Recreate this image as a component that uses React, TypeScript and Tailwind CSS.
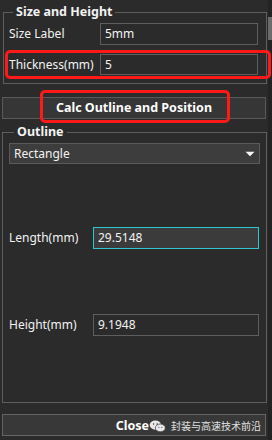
import { IoMdArrowDropdown } from "react-icons/io"

const font = { fontFamily: '"Noto Sans", "Noto Sans CJK SC", sans-serif' }

const App = () => {
    return (
        <div className="w-[272px] h-[440px] bg-[#2b2b2b] flex overflow-hidden text-[#f2f2f2] relative" style={font}>
            <div className="w-[268px] flex flex-col">

                {/* Size and Height */}
                <fieldset className="ml-[3px] mr-[1px] mt-[4px] h-[80px] border border-[#5e5e5e] px-[5px]">
                    <legend className="ml-[4px] px-[3px] text-[12.5px] font-bold leading-[16px]">Size and Height</legend>
                    <div className="flex items-center mt-[3px]">
                        <span className="w-[91px] text-[12px]">Size Label</span>
                        <div className="w-[158px] h-[22px] border border-[#5e5e5e] text-[12px] px-[4px] leading-[20px]">5mm</div>
                    </div>
                    <div className="flex items-center mt-[9px]">
                        <span className="w-[91px] text-[12px]">Thickness(mm)</span>
                        <div className="w-[158px] h-[21px] border border-[#5e5e5e] text-[12px] px-[4px] leading-[19px]">5</div>
                    </div>
                </fieldset>

                <button className="mx-[2px] mt-[13px] h-[22px] border border-[#5a5a5a] bg-[#363636] text-[12.5px] font-bold text-white">
                    Calc Outline and Position
                </button>

                {/* Outline */}
                <fieldset className="ml-[2px] mr-[1px] mt-[5px] h-[279px] border border-[#5e5e5e] px-[6px]">
                    <legend className="ml-[5px] px-[3px] text-[12.5px] font-bold leading-[16px]">Outline</legend>
                    <div className="mt-[3px] h-[21px] w-[251px] border border-[#5a5a5a] bg-[#3d3d3d] flex items-center justify-between px-[4px] text-[12px]">
                        <span>Rectangle</span>
                        <IoMdArrowDropdown className="w-[18px] h-[18px] -mr-[4px] text-white" />
                    </div>
                    <div className="flex items-center mt-[63px]">
                        <span className="w-[84px] text-[12px]">Length(mm)</span>
                        <div className="w-[166px] h-[22px] border border-[#2ec4d0] bg-[#3b3b3b] text-[12px] px-[4px] leading-[20px]">29.5148</div>
                    </div>
                    <div className="flex items-center mt-[65px]">
                        <span className="w-[84px] text-[12px]">Height(mm)</span>
                        <div className="w-[166px] h-[22px] border border-[#5e5e5e] text-[12px] px-[4px] leading-[20px]">9.1948</div>
                    </div>
                </fieldset>

                <button className="mx-[2px] mt-[11px] h-[22px] border border-[#646464] bg-[#383838] text-[12.5px] font-bold text-white flex items-center justify-end pr-[4px]">
                    <span className="mt-[2px]">Close</span>
                    <svg viewBox="0 0 24 20" className="w-[17px] h-[15px] mt-[2px]">
                        <ellipse cx="9" cy="8" rx="8" ry="6.5" fill="#e8e8e8" />
                        <ellipse cx="16" cy="12" rx="7" ry="5.5" fill="#e8e8e8" stroke="#383838" strokeWidth="1" />
                        <circle cx="6.5" cy="6.5" r="1" fill="#383838" />
                        <circle cx="11.5" cy="6.5" r="1" fill="#383838" />
                        <circle cx="14" cy="11" r="0.8" fill="#383838" />
                        <circle cx="18" cy="11" r="0.8" fill="#383838" />
                    </svg>
                    <span className="ml-[5px] text-[10px] font-normal text-[#e0e0e0]" style={{ fontFamily: '"Noto Sans CJK SC", sans-serif' }}>封装与高速技术前沿</span>
                </button>
            </div>

            {/* scrollbar */}
            <div className="w-[4px] bg-[#232323] flex flex-col">
                <div className="mt-[17px] h-[23px] bg-[#6c6c6c]" />
            </div>

            {/* red annotation boxes */}
            <div className="absolute left-[5px] top-[50px] w-[266px] h-[29px] border-[3px] border-[#ff1a1a] rounded-[5px]" />
            <div className="absolute left-[40px] top-[90px] w-[190px] h-[33px] border-[3px] border-[#ff1a1a] rounded-[5px]" />
        </div>
    )
}

export default App
